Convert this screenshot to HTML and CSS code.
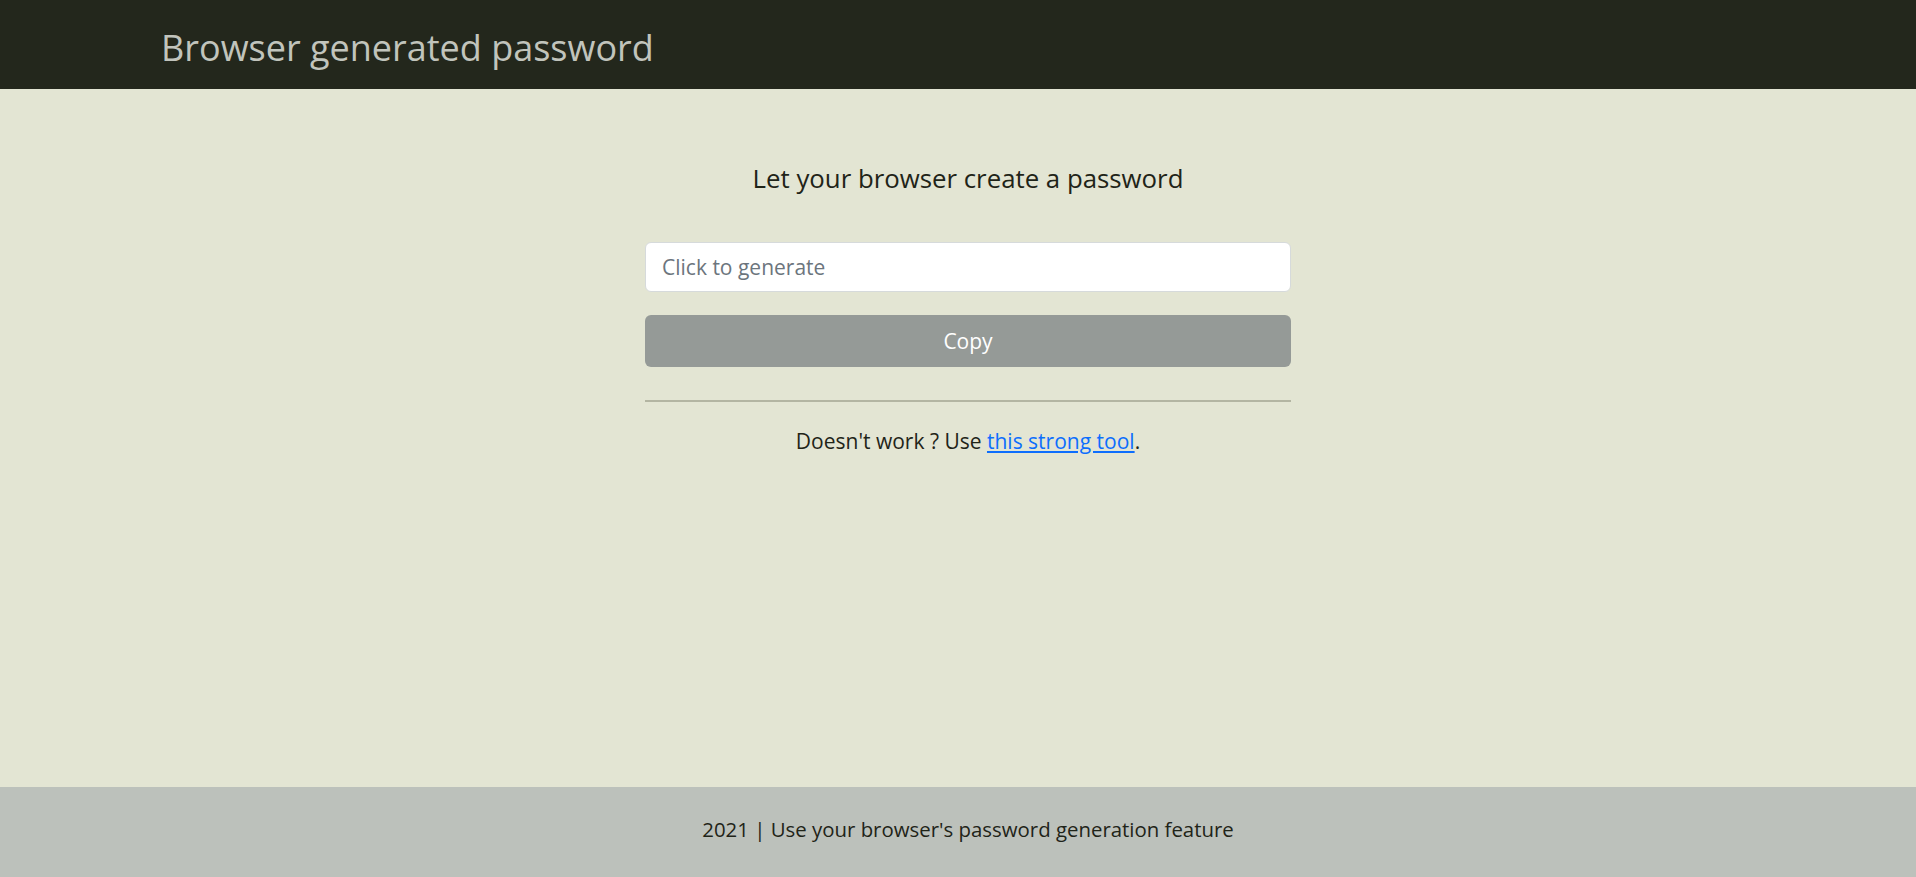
FILE: index.html
```html
<!DOCTYPE html>
<html lang="en">
<head>
<meta charset="utf-8">
<title>Browser generated password</title>
<link rel="stylesheet" href="styles.css">
</head>
<body>
<header class="topbar">
  <h1 class="brand">Browser generated password</h1>
</header>
<main class="main">
  <div class="panel">
    <h3 class="lead-title">Let your browser create a password</h3>
    <input class="pw-input" type="password" placeholder="Click to generate" autocomplete="new-password">
    <button class="copy-btn" type="button">Copy</button>
    <hr class="divider">
    <p class="fallback">Doesn't work ? Use <a href="#" class="tool-link">this strong tool</a>.</p>
  </div>
</main>
<footer class="footer">
  <p class="footer-text">2021 | Use your browser's password generation feature</p>
</footer>
</body>
</html>
```
FILE: styles.css
```css
* { box-sizing: border-box; }
html, body { height: 100%; }
body {
  margin: 0;
  min-height: 100vh;
  display: flex;
  flex-direction: column;
  font-family: "Open Sans", "Noto Sans", sans-serif;
  background: #e3e5d3;
  color: #1f2418;
}
.topbar {
  height: 89px;
  background: #23271c;
  display: flex;
  align-items: center;
  padding-left: 161px;
}
.brand {
  margin: 0;
  font-size: 36px;
  font-weight: 400;
  line-height: 1.2;
  color: #c1c4bc;
  padding-top: 6px;
}
.main {
  flex: 1;
  display: flex;
  justify-content: center;
  padding-left: 20px;
}
.panel {
  width: 646px;
  display: flex;
  flex-direction: column;
  align-items: stretch;
  text-align: center;
  padding-top: 71px;
}
.lead-title {
  margin: 0 0 46px;
  font-size: 25.8px;
  font-weight: 400;
  line-height: 36px;
  color: #1f2418;
}
.pw-input {
  height: 50px;
  border: 1px solid #d6dadb;
  border-radius: 6px;
  background: #fff;
  padding: 0 16px;
  font-family: inherit;
  font-size: 21px;
  color: #212529;
}
.pw-input::placeholder { color: #6c757d; }
.copy-btn {
  margin-top: 23px;
  height: 52px;
  border: 0;
  border-radius: 6px;
  background: #959a97;
  color: #fff;
  font-family: inherit;
  font-size: 21px;
  cursor: pointer;
}
.divider {
  margin: 33px 0 0;
  border: 0;
  border-top: 2px solid #b3b5a2;
  height: 0;
}
.fallback {
  margin: 24px 0 0;
  font-size: 21px;
  line-height: 30px;
}
.tool-link { color: #0d6efd; text-decoration: underline; }
.footer {
  height: 90px;
  background: #bcc1bb;
  display: flex;
  align-items: center;
  justify-content: center;
  padding-left: 20px;
  padding-bottom: 6px;
}
.footer-text {
  margin: 0;
  font-size: 20.4px;
  color: #1f2418;
}
```
